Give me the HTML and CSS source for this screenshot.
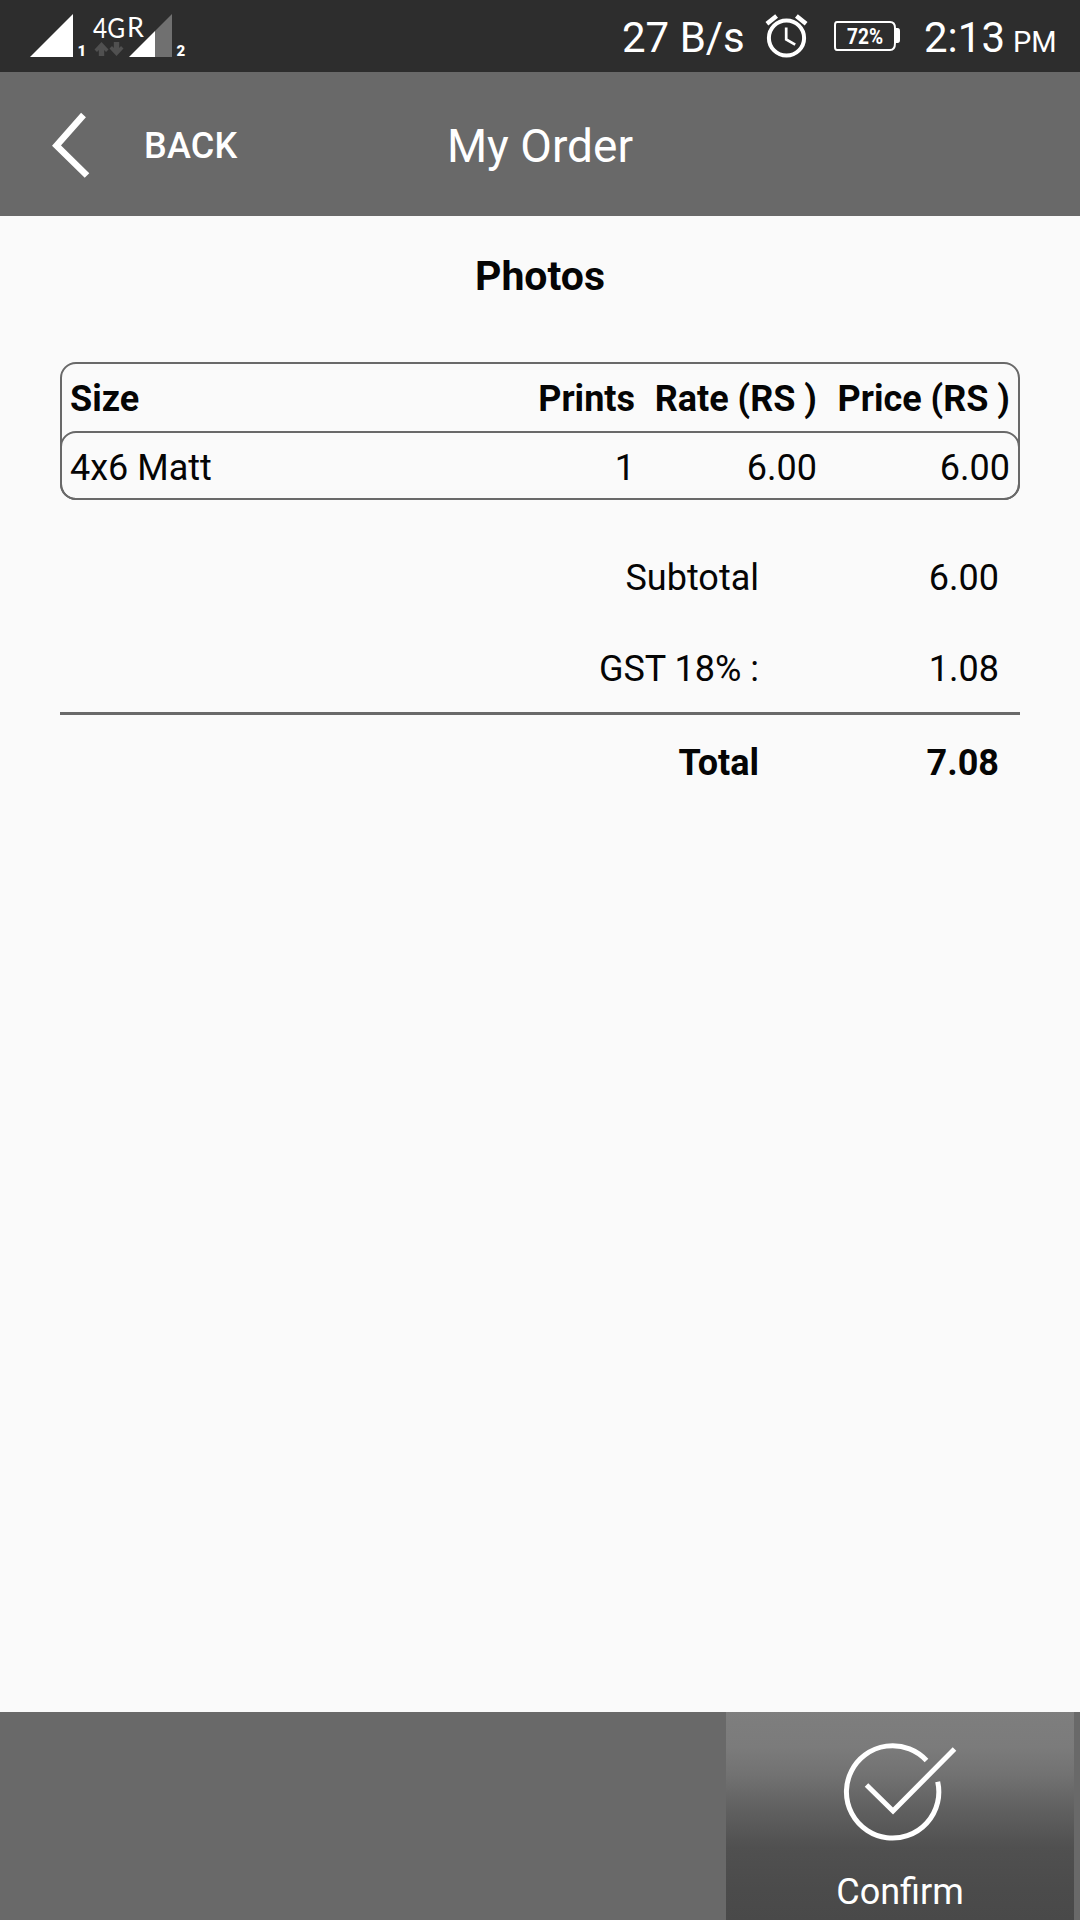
FILE: index.html
```html
<!DOCTYPE html>
<html lang="en">
<head>
<meta charset="utf-8">
<title>My Order</title>
<link rel="stylesheet" href="styles.css">
</head>
<body>
<div class="screen">
  <div class="status">
    <svg class="signals" width="200" height="72" viewBox="0 0 200 72">
      <path d="M30 57L73 14V57Z" fill="#fff"/>
      <text class="sim" x="77.5" y="56">1</text>
      <text class="net" x="93" y="38" textLength="32" lengthAdjust="spacingAndGlyphs">4G</text>
      <text class="net" x="127" y="36.500">R</text>
      <path d="M101.500 42L108.500 49.500L106 52L104.200 50V56H98.800V50L97 52L94.500 49.500Z M116.500 56L109.500 48.500L112 46L113.800 48V42H119.200V48L121 46L123.500 48.500Z" fill="#505050"/>
      <path d="M129 57L155 31V57Z" fill="#fff"/>
      <path d="M155 31L172 14V57H155Z" fill="#707070"/>
      <text class="sim" x="176.500" y="56">2</text>
    </svg>
    <span class="speed">27 B/s</span>
    <svg class="alarm" width="44" height="44" viewBox="0 0 44 44" fill="none" stroke="#fff">
      <circle cx="21.500" cy="24" r="17.600" stroke-width="4"/>
      <path d="M21.200 13.500V25.500L30.200 30.700" stroke-width="2.700"/>
      <path d="M1.900 9.700L11.600 1.900M31.400 1.900L41.100 9.700" stroke-width="4.500"/>
    </svg>
    <svg class="battery" width="68" height="30" viewBox="0 0 68 30">
      <path d="M3 1H56Q61 1 61 7V22Q61 29 56 29H3Q1 29 1 26V4Q1 1 3 1Z" fill="none" stroke="#fff" stroke-width="2"/>
      <path d="M62 7H63.500Q66 7 66 10V19Q66 22 63.500 22H62Z" fill="#fff"/>
      <text class="charge" x="13" y="23" textLength="36" lengthAdjust="spacingAndGlyphs">72%</text>
    </svg>
    <span class="clock">2:13</span><span class="meridiem">PM</span>
  </div>
  <header class="bar">
    <div class="back">
      <svg width="44" height="70" viewBox="0 0 44 70"><path d="M34.500 5L7.500 35.500L38 65.500" fill="none" stroke="#fff" stroke-width="6.500"/></svg>
      <span class="back-label">BACK</span>
    </div>
    <h1 class="title">My Order</h1>
    <div></div>
  </header>
  <main class="content">
    <h2 class="heading">Photos</h2>
    <div class="table">
      <div class="row head"><span>Size</span><span>Prints</span><span>Rate (RS )</span><span>Price (RS )</span></div>
      <div class="row item"><span>4x6 Matt</span><span>1</span><span>6.00</span><span>6.00</span></div>
    </div>
    <div class="sum subtotal"><span>Subtotal</span><span>6.00</span></div>
    <div class="sum tax"><span>GST 18% :</span><span>1.08</span></div>
    <div class="sum total"><span>Total</span><span>7.08</span></div>
  </main>
  <footer class="footer">
    <div class="confirm">
      <svg width="116" height="102" viewBox="0 0 116 102" fill="none" stroke="#fff" stroke-width="5">
        <path d="M84.500 18.500A46.200 46.200 0 1 0 95.700 39.800"/>
        <path d="M24.500 43L51 69L112.500 7"/>
      </svg>
      <span>Confirm</span>
    </div>
  </footer>
</div>
</body>
</html>
```
FILE: styles.css
```css
* { box-sizing: border-box; }
body { margin: 0; font-family: Roboto, sans-serif; font-size: 36px; line-height: 42px; color: #050505; }
.screen { width: 1080px; height: 1920px; display: flex; flex-direction: column; background: #fafafa; overflow: hidden; }

.status { height: 72px; background: #2d2d2d; color: #fff; display: flex; align-items: flex-start; white-space: nowrap; }
.signals { flex: none; }
.net { font-family: Lato, sans-serif; font-size: 27px; fill: #fff; }
.sim { font-family: Roboto, sans-serif; font-weight: 900; font-size: 15px; fill: #fff; }
.speed { width: 123px; margin: 13px 0 0 422px; font-size: 42px; line-height: 49px; }
.alarm { margin: 14px 0 0 20px; flex: none; }
.battery { margin: 21px 0 0 25px; flex: none; }
.charge { font-family: Roboto, sans-serif; font-weight: 700; font-size: 22px; fill: #fff; }
.clock { width: 81px; margin: 13px 0 0 22px; font-size: 42px; line-height: 49px; }
.meridiem { margin: 25px 0 0 8px; font-size: 29px; line-height: 34px; }

.bar { height: 144px; background: #696969; color: #fff; display: grid; grid-template-columns: 1fr auto 1fr; align-items: center; }
.back { display: flex; align-items: center; padding: 1px 0 0 49px; gap: 51px; }
.back-label { font-weight: 500; padding-top: 2px; letter-spacing: 0.2px; }
.title { margin: 4px 0 0; font-weight: 400; font-size: 46px; line-height: 54px; }

.content { flex: 1; padding: 36px 60px 0; }
.heading { margin: 0 0 61px; text-align: center; font-size: 41px; line-height: 49px; font-weight: 700; }
.table { height: 138px; border: 2px solid #696969; border-radius: 16px; }
.row { display: grid; grid-template-columns: 1fr 120px 182px 193px; padding: 14px 8px 0 8px; }
.row span:not(:first-child) { text-align: right; }
.head { height: 67px; font-weight: 700; }
.item { height: 69px; margin: 0 -2px; border: 2px solid #696969; border-radius: 16px; }

.sum { display: grid; grid-template-columns: 699px 1fr; padding-right: 21px; text-align: right; }
.subtotal { margin-top: 57px; }
.tax { margin-top: 49px; padding-bottom: 22px; border-bottom: 3px solid #696969; }
.total { margin-top: 27px; font-weight: 700; }

.footer { height: 208px; background: #696969; display: flex; justify-content: flex-end; padding-right: 6px; }
.confirm { width: 348px; padding: 30px 0 0; display: flex; flex-direction: column; align-items: center; gap: 27px; color: #fff; background: linear-gradient(#7e7e7e 0%, #7b7b7b 17%, #727272 30%, #5f5f5f 48%, #505050 65%, #4b4b4b 85%, #494949 100%); }
```
